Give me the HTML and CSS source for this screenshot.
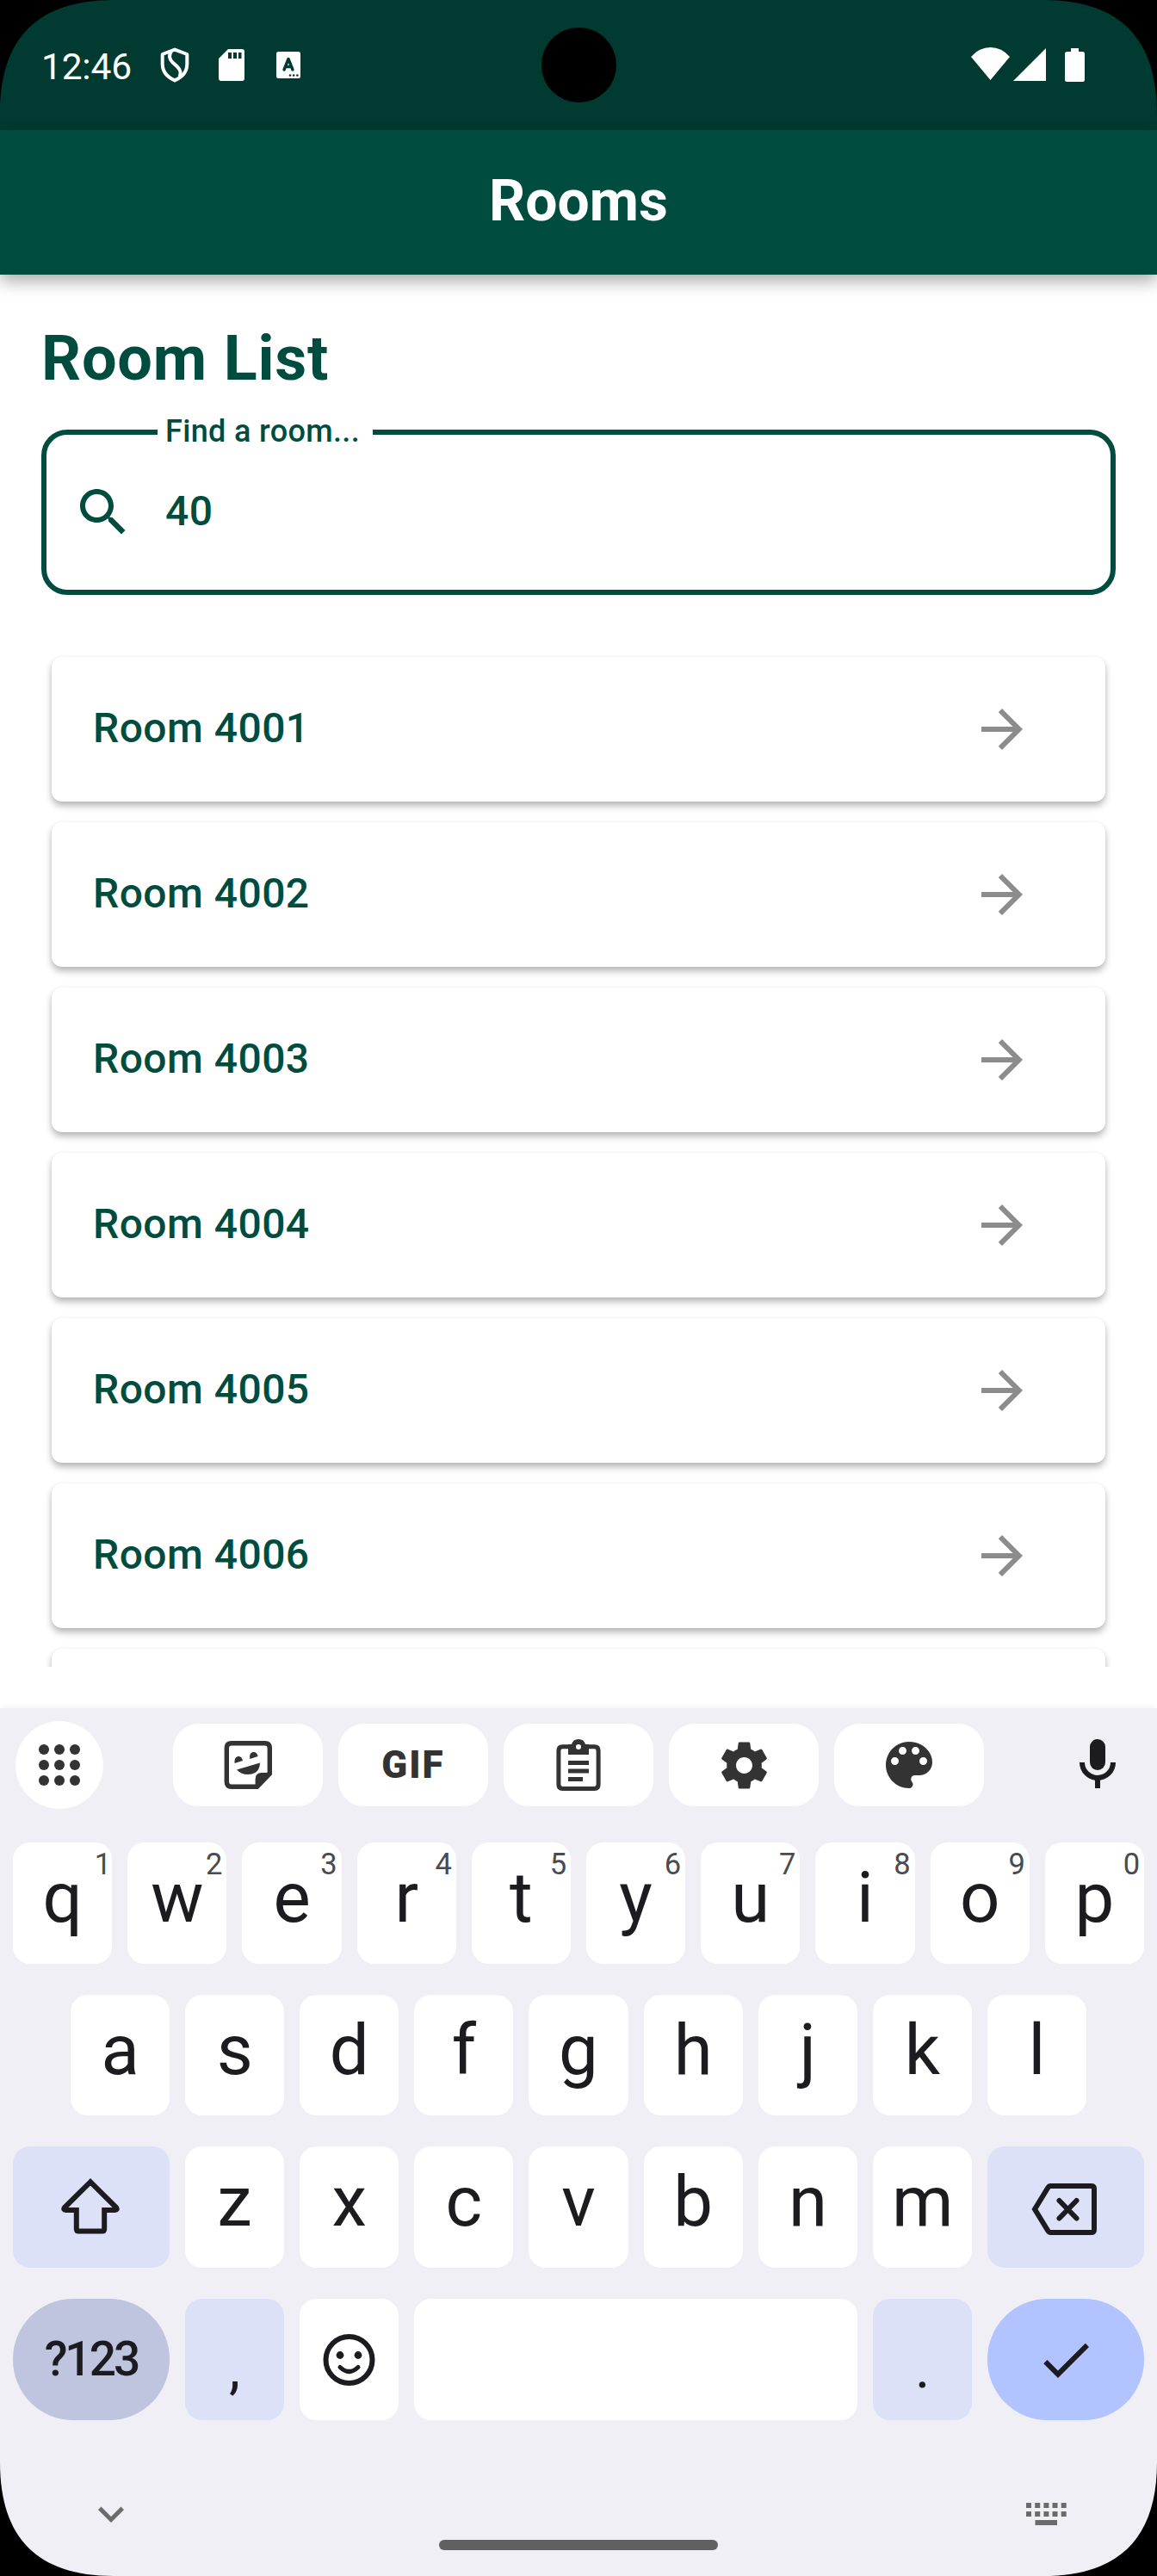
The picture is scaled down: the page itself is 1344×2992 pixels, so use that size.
FILE: index.html
```
<!DOCTYPE html>
<html lang="en">
<head>
<meta charset="utf-8">
<title>Rooms</title>
<link rel="stylesheet" href="styles.css">
</head>
<body>
<svg class="defs" aria-hidden="true">
  <symbol id="arrow" viewBox="0 0 24 24"><path d="M12 4l-1.41 1.41L16.17 11H4v2h12.17l-5.58 5.59L12 20l8-8z"/></symbol>
  <symbol id="corner" viewBox="0 0 132 132"><path d="M0 0H132C44 0 0 44 0 132Z"/></symbol>
</svg>
<div class="phone">
  <div class="status">
    <span class="clock">12:46</span>
    <svg class="shield" viewBox="0 0 34 41"><path d="M17 2.6 31.3 8V19C31.3 27.500 26 34.500 17 38.400 8 34.500 2.700 27.500 2.700 19V8Z" fill="none" stroke="#fff" stroke-width="4" stroke-linejoin="round"/><path d="M13 4.500C9.500 9.500 10.500 13.500 14.500 17.500L20 22.500C24 26.500 24.500 29.500 22.500 34" fill="none" stroke="#fff" stroke-width="4"/></svg>
    <svg class="sdcard" viewBox="0 0 30 37"><path fill-rule="evenodd" d="M11 0H27Q30 0 30 3V34Q30 37 27 37H3Q0 37 0 34V11ZM11 4V11H15V4ZM17 4V11H21V4ZM23 4V11H26.500V4Z" fill="#fff"/></svg>
    <svg class="lang" viewBox="0 0 28 31"><rect width="28" height="31" rx="2.500" fill="#fff"/><path d="M9 21 14 8.500 19 21M10.500 17.500H17.500" fill="none" stroke="#003a30" stroke-width="3.400" stroke-linecap="round" stroke-linejoin="round"/><g fill="#003a30"><circle cx="16" cy="27.500" r="1.300"/><circle cx="20.200" cy="27.500" r="1.300"/><circle cx="24.400" cy="27.500" r="1.300"/></g></svg>
    <span class="spacer"></span>
    <svg class="wifi" viewBox="0 0 45 38"><path d="M22.500 38 0 11Q9.500 0 22.500 0T45 11Z" fill="#fff"/></svg>
    <svg class="signal" viewBox="0 0 38 38"><path d="M38 0V38H0Z" fill="#fff"/></svg>
    <svg class="battery" viewBox="0 0 23 39"><path d="M7 0H16V4H20.500Q23 4 23 6.500V36.500Q23 39 20.500 39H2.500Q0 39 0 36.500V6.500Q0 4 2.500 4H7Z" fill="#fff"/></svg>
  </div>
  <header class="appbar">Rooms</header>
  <main class="content">
    <h1>Room List</h1>
    <div class="field">
      <span class="label">Find a room...</span>
      <svg class="search" viewBox="0 0 24 24"><path d="M15.5 14h-.79l-.28-.27C15.41 12.590 16 11.110 16 9.500 16 5.910 13.090 3 9.500 3S3 5.910 3 9.500 5.910 16 9.500 16c1.610 0 3.090-.59 4.230-1.570l.27.28v.79l5 4.990L20.490 19l-4.990-5zm-6 0C7.010 14 5 11.990 5 9.500S7.010 5 9.500 5 14 7.010 14 9.500 11.990 14 9.500 14z"/></svg>
      <span class="value">40</span>
    </div>
    <div class="list">
      <div class="card"><span>Room 4001</span><svg><use href="#arrow"/></svg></div>
      <div class="card"><span>Room 4002</span><svg><use href="#arrow"/></svg></div>
      <div class="card"><span>Room 4003</span><svg><use href="#arrow"/></svg></div>
      <div class="card"><span>Room 4004</span><svg><use href="#arrow"/></svg></div>
      <div class="card"><span>Room 4005</span><svg><use href="#arrow"/></svg></div>
      <div class="card"><span>Room 4006</span><svg><use href="#arrow"/></svg></div>
      <div class="card"></div>
    </div>
  </main>
  <section class="keyboard">
    <div class="tools">
      <div class="round"><svg viewBox="0 0 102 102"><g fill="#333"><circle cx="33" cy="33" r="6"/><circle cx="51" cy="33" r="6"/><circle cx="69" cy="33" r="6"/><circle cx="33" cy="51" r="6"/><circle cx="51" cy="51" r="6"/><circle cx="69" cy="51" r="6"/><circle cx="33" cy="69" r="6"/><circle cx="51" cy="69" r="6"/><circle cx="69" cy="69" r="6"/></g></svg></div>
      <div class="chips">
        <div class="chip"><svg viewBox="0 0 72 72"><path d="M46 61.300H17Q11.300 61.300 11.300 55.600V16.400Q11.300 10.700 17 10.700H55.600Q61.300 10.700 61.300 16.400V46" fill="none" stroke="#333" stroke-width="5.400"/><path d="M44.600 64V52.500Q44.600 45 52 45H58.600V44H64V47.300L47.800 64Z"/><path d="M20.500 34Q20 27 24.300 26Q28.600 25.500 30 31ZM38.300 29Q37 22.300 41.700 21Q46.300 20.300 47.600 26Z"/><path d="M23 41.500 50 33.600Q49.500 47 36 47Q28 47 23 41.500Z"/></svg></div>
        <div class="chip gif">GIF</div>
        <div class="chip"><svg viewBox="0 0 72 72"><path d="M26 14.700H17.500Q12.900 14.700 12.900 19.300V58.800Q12.900 63.400 17.500 63.400H54.500Q59.100 63.400 59.100 58.800V19.300Q59.100 14.700 54.500 14.700H46" fill="none" stroke="#333" stroke-width="5"/><path fill-rule="evenodd" d="M24 24V12H28Q29.500 6 36 6T44 12H48V24ZM36 12A3 3 0 1 0 36 18 3 3 0 1 0 36 12Z"/><path d="M24 31H48V36H24ZM24 40.500H48V45.500H24ZM24 50H41V55H24Z"/></svg></div>
        <div class="chip"><svg class="gear" viewBox="0 0 24 24"><path d="M19.430 12.980c.04-.32.070-.64.070-.98s-.03-.66-.07-.98l2.110-1.650c.19-.15.240-.42.120-.64l-2-3.460c-.12-.22-.39-.3-.61-.22l-2.490 1c-.52-.4-1.080-.73-1.690-.98l-.38-2.650C14.460 2.180 14.250 2 14 2h-4c-.25 0-.46.180-.49.420l-.38 2.650c-.61.250-1.170.590-1.690.980l-2.490-1c-.23-.09-.49 0-.61.220l-2 3.460c-.13.220-.07.490.120.640l2.110 1.650c-.04.320-.07.650-.07.980s.030.660.070.980l-2.110 1.650c-.19.150-.24.420-.12.640l2 3.460c.12.220.390.300.610.220l2.490-1c.52.400 1.080.730 1.690.980l.38 2.650c.03.240.240.420.490.420h4c.25 0 .460-.18.490-.42l.38-2.650c.61-.25 1.170-.59 1.690-.98l2.490 1c.23.090.490 0 .610-.22l2-3.460c.12-.22.070-.49-.12-.64l-2.110-1.650zM12 15.500c-1.930 0-3.500-1.570-3.500-3.500s1.570-3.500 3.500-3.500 3.500 1.570 3.500 3.500-1.570 3.500-3.500 3.500z"/></svg></div>
        <div class="chip"><svg viewBox="0 0 24 24"><path d="M12 3c-4.970 0-9 4.030-9 9s4.030 9 9 9c.83 0 1.500-.67 1.500-1.500 0-.39-.15-.74-.39-1.010-.23-.26-.38-.61-.38-.99 0-.83.670-1.500 1.500-1.500H16c2.760 0 5-2.240 5-5 0-4.420-4.030-8-9-8zm-5.500 9c-.83 0-1.500-.67-1.500-1.500S5.670 9 6.500 9 8 9.670 8 10.500 7.330 12 6.500 12zm3-4C8.670 8 8 7.330 8 6.500S8.670 5 9.500 5s1.500.67 1.500 1.500S10.330 8 9.500 8zm5 0c-.83 0-1.500-.67-1.500-1.500S13.670 5 14.500 5s1.500.67 1.500 1.500S15.330 8 14.500 8zm3 4c-.83 0-1.500-.67-1.500-1.500S16.670 9 17.500 9s1.500.67 1.500 1.500-.67 1.500-1.500 1.500z"/></svg></div>
      </div>
      <svg class="mic" viewBox="0 0 24 24"><rect x="9" y="2" width="6" height="12" rx="3"/><path d="M6 11a6 6 0 0 0 12 0M12 17v4" fill="none" stroke="#1b1b20" stroke-width="2"/></svg>
    </div>
    <div class="keys">
      <div class="row">
        <div class="key">q<sup class="narrow">1</sup></div><div class="key">w<sup>2</sup></div><div class="key">e<sup>3</sup></div><div class="key">r<sup>4</sup></div><div class="key">t<sup>5</sup></div><div class="key">y<sup>6</sup></div><div class="key">u<sup>7</sup></div><div class="key">i<sup>8</sup></div><div class="key">o<sup>9</sup></div><div class="key">p<sup>0</sup></div>
      </div>
      <div class="row inset">
        <div class="key">a</div><div class="key">s</div><div class="key">d</div><div class="key">f</div><div class="key">g</div><div class="key">h</div><div class="key">j</div><div class="key">k</div><div class="key">l</div>
      </div>
      <div class="row">
        <div class="key wide soft"><svg viewBox="0 0 72 72"><path d="M35 6.300 5 36Q3 39 6.500 39H18.800V61Q18.800 63.500 21.300 63.500H48.700Q51.200 63.500 51.200 61V39H63.500Q67 39 65 36Z" fill="none" stroke="#1b1b20" stroke-width="6"/></svg></div>
        <div class="key">z</div><div class="key">x</div><div class="key">c</div><div class="key">v</div><div class="key">b</div><div class="key">n</div><div class="key">m</div>
        <div class="key wide soft"><svg class="erase" viewBox="0 0 76 60"><path d="M22.500 3H69.500Q73 3 73 6.500V53.500Q73 57 69.500 57H22.500Q20.500 57 19.300 55L4 30 19.300 5Q20.500 3 22.500 3Z" fill="none" stroke="#1b1b20" stroke-width="6"/><path d="M32.500 20 52.500 40.500M52.500 20 32.500 40.500" stroke="#1b1b20" stroke-width="6" stroke-linecap="round"/></svg></div>
      </div>
      <div class="row">
        <div class="key wide mode">?123</div>
        <div class="key soft punct">,</div>
        <div class="key"><svg viewBox="0 0 72 72"><circle cx="35.500" cy="36" r="27" fill="none" stroke="#1b1b20" stroke-width="6"/><circle cx="25" cy="30.500" r="4.400"/><circle cx="46" cy="30.500" r="4.400"/><path d="M25 44.500Q35.500 54.500 46 44.500" fill="none" stroke="#1b1b20" stroke-width="5" stroke-linecap="round"/></svg></div>
        <div class="key space"></div>
        <div class="key soft punct">.</div>
        <div class="key wide done"><svg viewBox="0 0 24 24"><path d="M9 16.170L4.830 12l-1.420 1.410L9 19 21 7l-1.410-1.410z"/></svg></div>
      </div>
    </div>
    <div class="nav">
      <svg class="hide" viewBox="0 0 24 24"><path d="M16.590 8.590L12 13.170 7.410 8.590 6 10l6 6 6-6z"/></svg>
      <span class="pill"></span>
      <svg class="switch" viewBox="0 0 47 26"><path d="M0 0h6v6H0zM10.200 0h6v6h-6zM20.400 0h6v6h-6zM30.500 0h6v6h-6zM40.700 0h6v6h-6zM0 10h6v6H0zM10.200 10h6v6h-6zM20.400 10h6v6h-6zM30.500 10h6v6h-6zM40.700 10h6v6h-6zM10.500 20h25.500v6H10.500z"/></svg>
    </div>
  </section>
  <span class="camera"></span>
  <svg class="corner tl"><use href="#corner"/></svg>
  <svg class="corner tr"><use href="#corner"/></svg>
  <svg class="corner bl"><use href="#corner"/></svg>
  <svg class="corner br"><use href="#corner"/></svg>
</div>
</body>
</html>
```
FILE: styles.css
```
* { box-sizing: border-box; }
body { margin: 0; background: #fff; font-family: Roboto, sans-serif; }
svg { display: block; flex: none; }
.defs { display: none; }

.phone {
  position: relative;
  width: 1344px;
  height: 2992px;
  overflow: hidden;
  display: flex;
  flex-direction: column;
}

/* Status bar */
.status {
  height: 151px;
  background: #003a30;
  color: #fff;
  display: flex;
  align-items: flex-start;
  padding: 55px 84px 0 48px;
}
.clock { font-size: 42.500px; line-height: 45px; width: 138px; letter-spacing: -.2px; }
.shield { width: 34px; height: 41px; }
.sdcard { width: 30px; height: 37px; margin: 2px 0 0 34px; }
.lang { width: 28px; height: 31px; margin: 5px 0 0 37px; }
.spacer { flex: 1; }
.wifi { width: 45px; height: 38px; }
.signal { width: 38px; height: 38px; margin: 1px 0 0 4px; }
.battery { width: 23px; height: 39px; margin: 1px 0 0 22px; }

/* App bar */
.appbar {
  position: relative;
  height: 168px;
  background: #004d40;
  color: #fff;
  font-size: 66px;
  font-weight: 700;
  line-height: 165px;
  text-align: center;
  box-shadow: 0 8px 18px rgba(0, 0, 0, .32);
}

/* Room list */
.content {
  height: 1665px;
  padding: 48px 48px 0;
  display: flex;
  flex-direction: column;
  color: #004d40;
}
h1 { margin: 0 0 32px; font-size: 72px; font-weight: 700; line-height: 100px; letter-spacing: .8px; }
.field {
  position: relative;
  height: 192px;
  border: 6px solid #004d40;
  border-radius: 30px;
  display: flex;
  align-items: center;
  padding-left: 30px;
}
.label {
  position: absolute;
  left: 129px;
  top: -28px;
  width: 250px;
  padding-left: 9px;
  background: #fff;
  font-size: 36px;
  font-weight: 500;
  line-height: 48px;
  letter-spacing: .35px;
  white-space: nowrap;
}
.search { width: 72px; height: 72px; fill: #004d40; }
.value { margin-left: 36px; padding-bottom: 3px; font-size: 48px; font-weight: 500; letter-spacing: .45px; }
.list {
  height: 1209px;
  margin: 36px -12px 0;
  padding: 36px 24px 0;
  overflow: hidden;
  display: flex;
  flex-direction: column;
  gap: 24px;
}
.card {
  flex: none;
  height: 168px;
  border-radius: 12px;
  background: #fff;
  box-shadow: 0 5px 9px rgba(0, 0, 0, .28), 0 1px 4px rgba(0, 0, 0, .06);
  display: flex;
  align-items: center;
  justify-content: space-between;
  padding: 0 84px 0 48px;
  font-size: 48px;
  font-weight: 500;
  letter-spacing: .45px;
}
.card span { padding-bottom: 3px; }
.card svg { width: 72px; height: 72px; fill: #8c8c8c; }

/* Keyboard */
.keyboard {
  position: relative;
  height: 1008px;
  background: #f0eff6;
  box-shadow: 0 0 9px rgba(0, 0, 0, .07);
  color: #1b1b20;
}
.tools {
  height: 156px;
  padding: 15px 33px 0 18px;
  display: flex;
  align-items: flex-start;
}
.round { width: 102px; height: 102px; border-radius: 50%; background: #fff; }
.chips { display: flex; gap: 18px; margin: 3px 0 0 81px; }
.chip {
  width: 174px;
  height: 96px;
  border-radius: 30px;
  background: #fff;
  color: #333;
  fill: #333;
  display: flex;
  align-items: center;
  justify-content: center;
}
.chip svg { width: 72px; height: 72px; }
.chip .gear { width: 65px; height: 65px; }
.gif { font-size: 44px; font-weight: 900; letter-spacing: 2px; }
.mic { width: 72px; height: 72px; margin: 15px 0 0 auto; fill: #1b1b20; }
.keys { padding: 0 15px; display: flex; flex-direction: column; gap: 36px; }
.row { height: 140.67px; display: flex; gap: 18px; }
.inset { padding: 0 67px; }
.key {
  position: relative;
  flex: 1 1 0;
  border-radius: 20px;
  background: #fff;
  font-size: 81.500px;
  line-height: 128px;
  text-align: center;
}
.key sup {
  position: absolute;
  top: 0;
  right: 5px;
  font-size: 34.500px;
  line-height: 50px;
  color: #4a4b50;
}
.key .narrow { right: 1px; }
.key svg { width: 72px; height: 72px; margin: 35px auto 0; fill: #1b1b20; }
.key .erase { width: 76px; height: 60px; margin: 43px 0 0 51px; }
.row .wide { flex: 0 0 181.800px; }
.row .space { flex: 0 0 514.800px; }
.soft { background: #dde1f8; }
.mode { background: #c0c5df; border-radius: 70px; font-size: 55px; font-weight: 500; line-height: 140px; letter-spacing: -3px; }
.done { background: #b2c4ff; border-radius: 70px; }
.punct { font-size: 66px; line-height: 162px; }
.nav {
  height: 181px;
  padding: 79px 105px 0 99px;
  display: flex;
}
.hide { width: 60px; height: 60px; fill: #6b6b6b; }
.pill { width: 324px; height: 12px; margin: 60px auto 0 351px; border-radius: 6px; background: #606062; }
.switch { width: 47px; height: 26px; margin-top: 17px; fill: #6b6b6b; }

/* Display cut-outs */
.camera {
  position: absolute;
  left: 628.500px;
  top: 31.500px;
  width: 87px;
  height: 87px;
  border-radius: 50%;
  background: #000;
}
.corner { position: absolute; width: 132px; height: 132px; }
.tl { left: 0; top: 0; }
.tr { right: 0; top: 0; transform: scaleX(-1); }
.bl { left: 0; bottom: 0; transform: scaleY(-1); }
.br { right: 0; bottom: 0; transform: scale(-1); }
```
